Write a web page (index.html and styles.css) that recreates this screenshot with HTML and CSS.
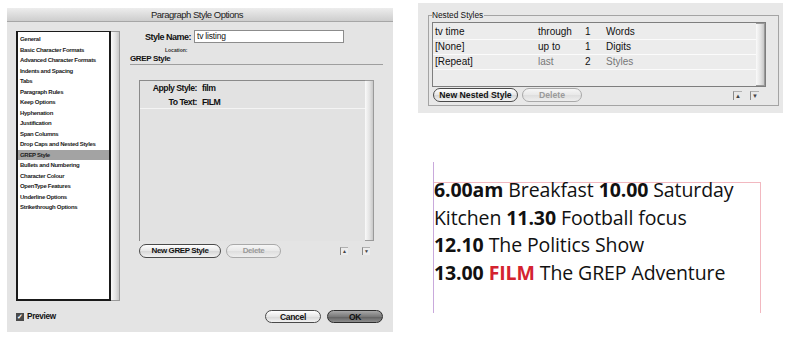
FILE: index.html
```html
<!DOCTYPE html>
<html>
<head>
	<meta charset="UTF-8">
	<title>Paragraph Style Options</title>
	<link rel="stylesheet" href="styles.css">
</head>
<body>
	<div class="page">
		<div class="dialog">
			<div class="titlebar">Paragraph Style Options</div>
			<div class="dlg-body">
				<div class="side">
					<ul class="cats">
						<li>General</li>
						<li>Basic Character Formats</li>
						<li>Advanced Character Formats</li>
						<li>Indents and Spacing</li>
						<li>Tabs</li>
						<li>Paragraph Rules</li>
						<li>Keep Options</li>
						<li>Hyphenation</li>
						<li>Justification</li>
						<li>Span Columns</li>
						<li>Drop Caps and Nested Styles</li>
						<li class="sel">GREP Style</li>
						<li>Bullets and Numbering</li>
						<li>Character Colour</li>
						<li>OpenType Features</li>
						<li>Underline Options</li>
						<li>Strikethrough Options</li>
					</ul>
					<div class="vscroll"></div>
				</div>
				<div class="main">
					<div class="name-row">
						<span class="name-lbl">Style Name:</span>
						<div class="field">tv listing</div>
					</div>
					<div class="loc">Location:</div>
					<div class="section">GREP Style</div>
					<div class="grep-box">
						<div class="grep-list">
							<div class="grep-item">
								<div class="gr"><span class="k">Apply Style:</span><span class="v">film</span></div>
								<div class="gr"><span class="k">To Text:</span><span class="v">FILM</span></div>
							</div>
						</div>
						<div class="vscroll"></div>
					</div>
					<div class="btn-row">
						<button class="pill grep-new">New GREP Style</button>
						<button class="pill off grep-del">Delete</button>
						<span class="spacer"></span>
						<span class="arrow">&#9650;</span>
						<span class="arrow">&#9660;</span>
					</div>
				</div>
			</div>
			<div class="footer">
				<span class="chk">&#10003;</span>
				<span class="chk-lbl">Preview</span>
				<span class="spacer"></span>
				<button class="pill foot-btn">Cancel</button>
				<button class="pill foot-btn ok">OK</button>
			</div>
		</div>

		<div class="right">
			<div class="nested">
				<div class="frame">
					<span class="legend">Nested Styles</span>
					<div class="ntable">
						<div class="nrows">
							<div class="nrow"><span class="c1">tv time</span><span class="c2">through</span><span class="c3">1</span><span class="c4">Words</span></div>
							<div class="nrow"><span class="c1">[None]</span><span class="c2">up to</span><span class="c3">1</span><span class="c4">Digits</span></div>
							<div class="nrow"><span class="c1">[Repeat]</span><span class="c2 dim">last</span><span class="c3">2</span><span class="c4 dim">Styles</span></div>
							<div class="nrow empty"></div>
						</div>
						<div class="vscroll"></div>
					</div>
					<div class="btn-row nbtns">
						<button class="pill nest-new">New Nested Style</button>
						<button class="pill off nest-del">Delete</button>
						<span class="spacer"></span>
						<span class="arrow">&#9650;</span>
						<span class="arrow">&#9660;</span>
					</div>
				</div>
			</div>

			<div class="sample">
				<div class="textframe">
					<div class="copy">
						<p><b>6.00am</b> Breakfast <b>10.00</b> Saturday<br>Kitchen <b>11.30</b> Football focus</p>
						<p><b>12.10</b> The Politics Show</p>
						<p><b>13.00</b> <b class="film">FILM</b> The GREP Adventure</p>
					</div>
				</div>
			</div>
		</div>
	</div>
</body>
</html>
```

FILE: styles.css
```css
body {
	margin: 0;
	background: #fff;
	font-family: "Liberation Sans", Arial, sans-serif;
	color: #111;
}

.page {
	display: flex;
	align-items: flex-start;
}

/* dialog */
.dialog {
	margin: 8px 0 0 7px;
	width: 386px;
	height: 324px;
	background: #e4e4e4;
	display: flex;
	flex-direction: column;
}

.titlebar {
	height: 14px;
	line-height: 14px;
	text-align: center;
	font-size: 9.5px;
	letter-spacing: -0.5px;
	background: linear-gradient(#ededed, #cdcdcd);
	border-bottom: 1px solid #a6a6a6;
	box-sizing: border-box;
	color: #222;
	padding-right: 6px;
}

.dlg-body {
	display: flex;
	padding: 9px 0 0 9px;
}

.side {
	width: 104px;
	height: 270px;
	display: flex;
}

.cats {
	flex: 1;
	margin: 0;
	padding: 2px 0 0;
	list-style: none;
	background: #fff;
	border: 2px solid #1a1a1a;
	border-top-width: 1px;
}

.cats li {
	font-size: 6px;
	font-weight: bold;
	letter-spacing: -0.3px;
	line-height: 10.5px;
	height: 10.5px;
	padding-left: 2px;
	white-space: nowrap;
	color: #1c1c1c;
}

.cats li.sel {
	background: #a3a3a3;
}

.vscroll {
	width: 8px;
	background: linear-gradient(90deg, #fafafa, #e2e2e2 60%, #c8c8c8);
	border: 1px solid #9a9a9a;
	border-left: 0;
}

.main {
	width: 253px;
	margin-left: 10px;
}

.name-row {
	display: flex;
	align-items: center;
	margin-top: -1px;
}

.name-lbl {
	width: 61px;
	text-align: right;
	font-size: 9px;
	letter-spacing: -0.5px;
	font-weight: bold;
	margin-right: 3px;
}

.field {
	width: 150px;
	height: 13px;
	box-sizing: border-box;
	background: #fff;
	border: 1px solid #8c8c8c;
	font-size: 8.5px;
	letter-spacing: -0.2px;
	line-height: 11px;
	padding-left: 2px;
}

.loc {
	font-size: 5px;
	font-weight: bold;
	padding-left: 35px;
	margin-top: 4px;
	height: 7px;
	color: #333;
}

.section {
	font-size: 8px;
	letter-spacing: -0.35px;
	font-weight: bold;
	border-bottom: 1px solid #9e9e9e;
	padding-bottom: 1px;
	line-height: 9px;
}

.grep-box {
	margin: 15px 0 0 9px;
	width: 235px;
	height: 161px;
	display: flex;
}

.grep-list {
	flex: 1;
	border-top: 1px solid #8a8a8a;
	border-left: 1px solid #8a8a8a;
	background: #e2e2e2;
}

.grep-item {
	padding-top: 1px;
	border-bottom: 1px solid #f4f4f4;
	height: 26px;
}

.gr {
	display: flex;
	font-size: 8.7px;
	letter-spacing: -0.5px;
	font-weight: bold;
	line-height: 13.5px;
}

.gr .k {
	width: 57px;
	text-align: right;
	margin-right: 5px;
}

.btn-row {
	display: flex;
	align-items: center;
	margin: 3px 0 0 9px;
	width: 235px;
}

.spacer {
	flex: 1;
}

.pill {
	height: 14px;
	box-sizing: border-box;
	padding: 0;
	border: 1px solid #4a4a4a;
	border-radius: 7px;
	background: linear-gradient(#ffffff, #e6e6e6 50%, #d6d6d6 51%, #f2f2f2);
	font-family: inherit;
	font-size: 8px;
	letter-spacing: -0.4px;
	font-weight: bold;
	color: #111;
	line-height: 12px;
}

.pill.off {
	border-color: #a9a9a9;
	color: #9a9a9a;
	background: linear-gradient(#f6f6f6, #e8e8e8 50%, #dedede 51%, #eeeeee);
}

.grep-new {
	width: 82px;
}

.grep-del {
	width: 55px;
	margin-left: 5px;
}

.arrow {
	width: 8px;
	height: 8px;
	box-sizing: border-box;
	border-left: 1px solid #8a8a8a;
	border-top: 1px solid #b0b0b0;
	background: #ececec;
	font-size: 5px;
	line-height: 7px;
	text-align: center;
	color: #444;
	margin-left: 14px;
}

.arrow:last-child {
	margin-right: 4px;
}

.footer {
	display: flex;
	align-items: center;
	margin-top: 9px;
	padding: 0 10px 0 9px;
	height: 13px;
}

.chk {
	width: 8px;
	height: 8px;
	background: #4a4a4a;
	color: #fff;
	font-size: 7px;
	line-height: 8px;
	text-align: center;
	font-weight: bold;
}

.chk-lbl {
	font-size: 8.2px;
	letter-spacing: -0.3px;
	font-weight: bold;
	margin-left: 3px;
}

.foot-btn {
	width: 56px;
	height: 13px;
	margin-left: 6px;
	font-size: 8.5px;
	letter-spacing: -0.3px;
}

.ok {
	background: linear-gradient(#a8a8a8, #7a7a7a 50%, #5e5e5e 51%, #8e8e8e);
	border-color: #2e2e2e;
	color: #101010;
}

/* right column */
.right {
	margin-left: 25px;
	width: 365px;
}

.nested {
	margin-top: 3px;
	height: 110px;
	background: #e8e8e8;
	padding: 12px 4px 0 10px;
	box-sizing: border-box;
}

.frame {
	position: relative;
	border: 1px solid #a4a4a4;
	height: 91px;
	box-sizing: border-box;
	padding: 6px 12px 0 3px;
}

.legend {
	position: absolute;
	top: -6px;
	left: 3px;
	background: #e8e8e8;
	font-size: 8.3px;
	line-height: 10px;
	padding-right: 1px;
	color: #111;
}

.ntable {
	display: flex;
	height: 65px;
	border: 1px solid #7e7e7e;
	box-sizing: border-box;
}

.nrows {
	flex: 1;
	background: #ececec;
	padding-top: 2px;
}

.nrow {
	display: flex;
	height: 14px;
	line-height: 14px;
	font-size: 10px;
	border-bottom: 1px solid #fbfbfb;
	color: #111;
}

.nrow.empty {
	border-bottom: 0;
}

.c1 {
	width: 103px;
	padding-left: 2px;
}

.c2 {
	width: 47px;
}

.c3 {
	width: 21px;
}

.dim {
	color: #777;
}

.nbtns {
	margin: 1px 0 0 1px;
	width: 334px;
}

.nest-new {
	width: 85px;
	font-size: 8.7px;
	letter-spacing: 0;
}

.nest-del {
	width: 60px;
	margin-left: 4px;
	font-size: 8.7px;
	letter-spacing: 0;
}

.nbtns .arrow {
	width: 9px;
	height: 9px;
	font-size: 6px;
	line-height: 8px;
	margin-left: 8px;
	background: none;
}

.nbtns .arrow:last-child {
	margin-right: 8px;
}

/* text sample */
.sample {
	margin: 49px 0 0 15px;
	padding-top: 20px;
	height: 151px;
	box-sizing: border-box;
	border-left: 1px solid #c9a9dc;
}

.textframe {
	width: 327px;
	height: 131px;
	box-sizing: border-box;
	border-top: 1px solid #f2b8c0;
	border-right: 1px solid #f2b8c0;
	font-family: "Open Sans", "Noto Sans", sans-serif;
	font-size: 19.5px;
	line-height: 27.6px;
	color: #111;
}

.copy {
	margin-top: -7px;
	letter-spacing: -0.1px;
}

.textframe p {
	margin: 0;
}

.textframe b {
	font-weight: 700;
}

.film {
	color: #d42330;
}
```
